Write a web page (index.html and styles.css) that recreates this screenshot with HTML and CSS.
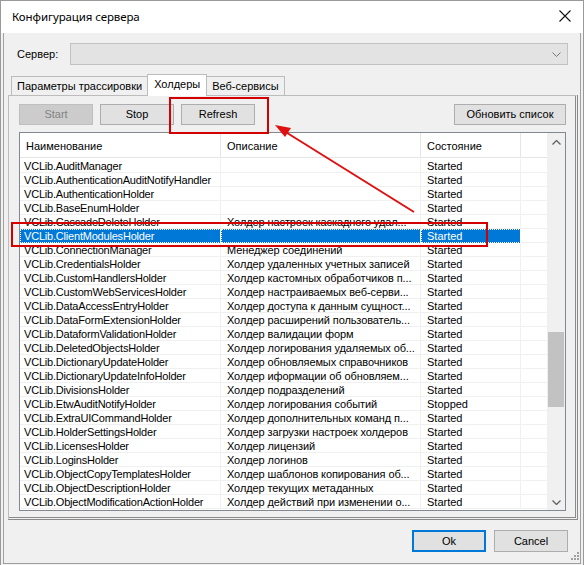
FILE: index.html
```html
<!DOCTYPE html>
<html lang="ru">
<head>
<meta charset="utf-8">
<title>Конфигурация сервера</title>
<link rel="stylesheet" href="styles.css">
</head>
<body>
<div class="window">
  <div class="titlebar">
    <span class="title">Конфигурация сервера</span>
    <svg class="close" width="12" height="12" viewBox="0 0 12 12"><path d="M0.5 0.5L11.5 11.5M11.5 0.5L0.5 11.5" stroke="#111" stroke-width="1.1" fill="none"/></svg>
  </div>
  <div class="client">
    <div class="server-row">
      <span class="label">Сервер:</span>
      <div class="combo">
        <svg class="chev" width="9" height="5" viewBox="0 0 9 5"><path d="M0.5 0.5L4.5 4.5L8.5 0.5" stroke="#777" fill="none"/></svg>
      </div>
    </div>
    <div class="tabs">
      <div class="tab">Параметры трассировки</div>
      <div class="tab active">Холдеры</div>
      <div class="tab">Веб-сервисы</div>
    </div>
    <div class="panel">
      <div class="toolbar">
        <button class="btn disabled">Start</button>
        <button class="btn">Stop</button>
        <button class="btn">Refresh</button>
        <span class="spacer"></span>
        <button class="btn wide">Обновить список</button>
      </div>
      <div class="list">
        <div class="grid">
          <div class="head">
            <div class="c c1">Наименование</div>
            <div class="c c2">Описание</div>
            <div class="c c3">Состояние</div>
            <div class="c c4"></div>
          </div>
          <div class="rows" id="rows"></div>
        </div>
        <div class="vscroll">
          <svg class="arrow" width="9" height="5" viewBox="0 0 9 5"><path d="M0.5 4.5L4.5 0.5L8.5 4.5" stroke="#606060" stroke-width="1.3" fill="none"/></svg>
          <div class="track"><div class="thumb"></div></div>
          <svg class="arrow" width="9" height="5" viewBox="0 0 9 5"><path d="M0.5 0.5L4.5 4.5L8.5 0.5" stroke="#606060" stroke-width="1.3" fill="none"/></svg>
        </div>
      </div>
    </div>
    <div class="footer">
      <button class="btn ok">Ok</button>
      <button class="btn">Cancel</button>
    </div>
    <svg class="grip" width="12" height="12" viewBox="0 0 12 12">
      <g fill="#a0a0a0"><rect x="9" y="1" width="2" height="2"/><rect x="6" y="4" width="2" height="2"/><rect x="9" y="4" width="2" height="2"/><rect x="3" y="7" width="2" height="2"/><rect x="6" y="7" width="2" height="2"/><rect x="9" y="7" width="2" height="2"/></g>
    </svg>
  </div>
  <div class="mark mark-refresh"></div>
  <div class="mark mark-row"></div>
  <svg class="pointer" width="584" height="565" viewBox="0 0 584 565">
    <line x1="414" y1="212" x2="284" y2="131" stroke="#e01010" stroke-width="2"/>
    <path d="M275 125L291 128L285 137Z" fill="#e01010"/>
  </svg>
</div>
<script src="app.js"></script>
</body>
</html>
```
FILE: app.js
```js
const data = [
  ["VCLib.AuditManager", "", "Started"],
  ["VCLib.AuthenticationAuditNotifyHandler", "", "Started"],
  ["VCLib.AuthenticationHolder", "", "Started"],
  ["VCLib.BaseEnumHolder", "", "Started"],
  ["VCLib.CascadeDeleteHolder", "Холдер настроек каскадного удал...", "Started"],
  ["VCLib.ClientModulesHolder", "", "Started", true],
  ["VCLib.ConnectionManager", "Менеджер соединений", "Started"],
  ["VCLib.CredentialsHolder", "Холдер удаленных учетных записей", "Started"],
  ["VCLib.CustomHandlersHolder", "Холдер кастомных обработчиков п...", "Started"],
  ["VCLib.CustomWebServicesHolder", "Холдер настраиваемых веб-серви...", "Started"],
  ["VCLib.DataAccessEntryHolder", "Холдер доступа к данным сущност...", "Started"],
  ["VCLib.DataFormExtensionHolder", "Холдер расширений пользователь...", "Started"],
  ["VCLib.DataformValidationHolder", "Холдер валидации форм", "Started"],
  ["VCLib.DeletedObjectsHolder", "Холдер логирования удаляемых об...", "Started"],
  ["VCLib.DictionaryUpdateHolder", "Холдер обновляемых справочников", "Started"],
  ["VCLib.DictionaryUpdateInfoHolder", "Холдер иформации об обновляем...", "Started"],
  ["VCLib.DivisionsHolder", "Холдер подразделений", "Started"],
  ["VCLib.EtwAuditNotifyHolder", "Холдер логирования событий", "Stopped"],
  ["VCLib.ExtraUICommandHolder", "Холдер дополнительных команд п...", "Started"],
  ["VCLib.HolderSettingsHolder", "Холдер загрузки настроек холдеров", "Started"],
  ["VCLib.LicensesHolder", "Холдер лицензий", "Started"],
  ["VCLib.LoginsHolder", "Холдер логинов", "Started"],
  ["VCLib.ObjectCopyTemplatesHolder", "Холдер шаблонов копирования об...", "Started"],
  ["VCLib.ObjectDescriptionHolder", "Холдер текущих метаданных", "Started"],
  ["VCLib.ObjectModificationActionHolder", "Холдер действий при изменении о...", "Started"]
];
const rows = document.getElementById("rows");
for (const [a, b, c, sel] of data) {
  const r = document.createElement("div");
  r.className = "row" + (sel ? " selected" : "");
  for (const [t, cls] of [[a, "c1"], [b, "c2"], [c, "c3"], ["", "c4"]]) {
    const d = document.createElement("div");
    d.className = "c " + cls;
    d.textContent = t;
    r.appendChild(d);
  }
  rows.appendChild(r);
}
```
FILE: styles.css
```css
* { box-sizing: border-box; }
html, body { margin: 0; padding: 0; }
body {
  width: 584px;
  height: 565px;
  overflow: hidden;
  background: #ffffff;
  font-family: "Liberation Sans", Arial, sans-serif;
  font-size: 11px;
  color: #000;
}
.window {
  position: relative;
  width: 584px;
  height: 565px;
  border: 1px solid #9a9a9a;
  border-bottom: none;
  display: flex;
  flex-direction: column;
  background: #f0f0f0;
}
.titlebar {
  height: 32px;
  background: #fff;
  display: flex;
  align-items: center;
  padding: 0 11px 0 11px;
  flex: none;
}
.title {
  font-family: "Noto Sans", "Open Sans", sans-serif;
  font-size: 11.5px;
  letter-spacing: -0.1px;
  flex: 1;
  padding-bottom: 1px;
}
.close { margin-right: 1px; margin-top: -2px; }
.client {
  position: relative;
  flex: 1;
  background: #f0f0f0;
  margin: 0 2px 1px 2px;
  border-left: 1px solid #a0a0a0;
  border-right: 1px solid #a0a0a0;
  border-bottom: 1px solid #a0a0a0;
  display: flex;
  flex-direction: column;
}
.server-row {
  display: flex;
  align-items: center;
  height: 22px;
  margin: 10px 0 0 0;
  padding: 0 12px 0 13px;
}
.label { width: 53px; }
.combo {
  flex: 1;
  height: 22px;
  background: #e3e3e3;
  border: 1px solid #c2c2c2;
  display: flex;
  align-items: center;
  justify-content: flex-end;
  padding-right: 6px;
}
.tabs {
  display: flex;
  align-items: flex-end;
  height: 21px;
  margin-top: 9px;
  padding-left: 7px;
  position: relative;
  z-index: 2;
}
.tab {
  height: 19px;
  padding: 0 5px;
  border: 1px solid #bcbcbc;
  border-bottom: none;
  background: #f0f0f0;
  display: flex;
  align-items: center;
}
.tab + .tab { border-left: none; }
.tab.active {
  height: 22px;
  margin: 0 -1px -1px -1px;
  border-left: 1px solid #bcbcbc;
  background: #ffffff;
  padding: 0 6px 3px 6px;
}
.tab.active + .tab { border-left: 1px solid #bcbcbc; }
.panel {
  margin: 0 2px 0 4px;
  height: 425px;
  background: #f0f0f0;
  border: 1px solid #bcbcbc;
  border-right: 3px double #8a8a8a;
  border-bottom: 3px double #8a8a8a;
  padding: 7px 9px 0 10px;
  display: flex;
  flex-direction: column;
}
.toolbar {
  display: flex;
  align-items: center;
  gap: 8px;
  height: 22px;
}
.spacer { flex: 1; }
.btn {
  font-family: "Liberation Sans", Arial, sans-serif;
  font-size: 11px;
  color: #000;
  height: 21px;
  width: 74px;
  background: #e1e1e1;
  border: 1px solid #adadad;
  padding: 0;
  margin: 0;
}
.toolbar .btn + .btn { margin-left: -1px; }
.btn.disabled {
  background: #cccccc;
  border-color: #bfbfbf;
  color: #838383;
}
.btn.wide { width: 112px; }
.list {
  margin-top: 7px;
  height: 379px;
  border: 1px solid #828790;
  background: #fff;
  display: flex;
}
.grid {
  flex: 1;
  overflow: hidden;
}
.head {
  display: flex;
  height: 25px;
  border-bottom: 1px solid #e5e5e5;
}
.head .c {
  display: flex;
  align-items: center;
  padding-left: 6px;
  padding-top: 1px;
  border-right: 1px solid #e5e5e5;
  color: #000;
}
.head .c4 { border-right: none; }
.c1 { width: 201px; }
.c2 { width: 200px; }
.c3 { width: 100px; }
.c4 { flex: 1; }
.rows { padding-top: 1px; }
.row {
  display: flex;
  height: 14px;
  line-height: 15px;
}
.row .c {
  border-right: 1px solid #f0f0f0;
  border-bottom: 1px solid #f0f0f0;
  padding-left: 4px;
  white-space: nowrap;
  overflow: hidden;
  height: 14px;
}
.row .c1 { letter-spacing: -0.2px; }
.row .c2 { letter-spacing: -0.1px; }
.row .c2, .row .c3 { padding-left: 6px; }
.row .c4 { border-right: none; }
.row.selected .c {
  background: #0078d7;
  color: #fff;
  border-right-color: #fff;
  border-bottom-color: #0078d7;
}
.row.selected .c1, .row.selected .c2, .row.selected .c3 {
  outline: 1px dotted #fff;
  outline-offset: -1px;
}
.row.selected .c4 { background: #fff; outline: none; border-bottom-color: #f0f0f0; }
.vscroll {
  width: 18px;
  background: #f0f0f0;
  display: flex;
  flex-direction: column;
  align-items: center;
}
.vscroll .arrow { margin: 7px 0 5px 0; flex: none; }
.track {
  flex: 1;
  width: 100%;
  position: relative;
}
.thumb {
  position: absolute;
  left: 1px;
  right: 1px;
  top: 182px;
  height: 75px;
  background: #c2c2c2;
}
.footer {
  flex: 1;
  display: flex;
  justify-content: flex-end;
  align-items: flex-start;
  gap: 8px;
  padding: 10px 12px 0 0;
}
.footer .btn { height: 22px; width: 74px; }
.footer .btn.ok {
  border: 2px solid #0078d7;
  background: #e1e1e1;
}
.grip { position: absolute; right: 0; bottom: 0; }
.mark {
  position: absolute;
  border: 2px solid #d40000;
  pointer-events: none;
}
.mark-refresh { left: 168px; top: 96px; width: 100px; height: 37px; }
.mark-row { left: 10px; top: 221px; width: 477px; height: 25px; }
.pointer { position: absolute; left: -1px; top: -1px; pointer-events: none; }
```
